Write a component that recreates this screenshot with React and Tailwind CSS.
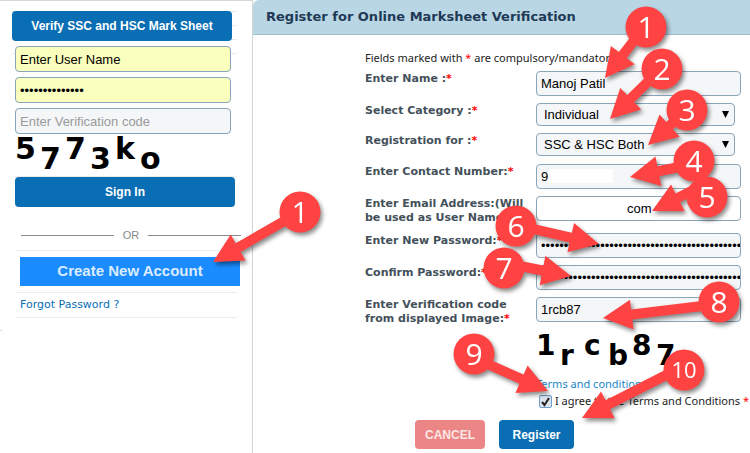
import React, { useState } from 'react';

// Numbered callouts: badge centre, arrow tail and arrow tip
const CALLOUTS = [
  { id: 'login', label: '1', center: [300, 212], tail: [300, 212], tip: [213, 262] },
  { id: 'name', label: '1', center: [646, 27], tail: [646, 25], tip: [605, 78] },
  { id: 'category', label: '2', center: [662, 69], tail: [662, 68], tip: [610, 119] },
  { id: 'contact', label: '4', center: [694, 161], tail: [694, 164], tip: [630, 177] },
  { id: 'email', label: '5', center: [707, 197], tail: [707, 183], tip: [652, 211] },
  { id: 'registration', label: '3', center: [687, 110], tail: [687, 110], tip: [648, 145] },
  { id: 'password', label: '6', center: [516, 226], tail: [516, 225], tip: [599, 244] },
  { id: 'confirm', label: '7', center: [504, 268], tail: [504, 263], tip: [571, 276] },
  { id: 'code', label: '8', center: [719, 302], tail: [719, 304], tip: [603, 318] },
  { id: 'agree', label: '9', center: [474, 354], tail: [474, 358], tip: [548, 391] },
  { id: 'register', label: '10', center: [684, 370], tail: [684, 366], tip: [582, 418] },
];

const arrowPoints = ([x1, y1], [x2, y2]) => {
  const len = Math.hypot(x2 - x1, y2 - y1);
  const ux = (x2 - x1) / len;
  const uy = (y2 - y1) / len;
  const bx = x2 - ux * 29;
  const by = y2 - uy * 29;
  const at = (x, y, d) => `${x - uy * d},${y + ux * d}`;
  return [
    at(x1, y1, 5),
    at(bx, by, 5),
    at(bx, by, 15),
    `${x2},${y2}`,
    at(bx, by, -15),
    at(bx, by, -5),
    at(x1, y1, -5),
  ].join(' ');
};

const Callouts = () => (
  <svg
    className="pointer-events-none absolute left-0 top-0 drop-shadow-[2px_3px_2px_rgba(0,0,0,0.45)]"
    width="750"
    height="453"
  >
    {CALLOUTS.map(({ id, label, center, tail, tip }) => (
      <g key={id}>
        <polygon points={arrowPoints(tail, tip)} fill="#ff4343" />
        <circle cx={center[0]} cy={center[1]} r="20.5" fill="#ff4343" />
        <text
          x={center[0]}
          y={center[1] + (label.length > 1 ? 8 : 11)}
          textAnchor="middle"
          fill="#fff"
          className={
            label.length > 1
              ? "font-['Open_Sans',sans-serif] text-[22px] font-medium"
              : "font-['Open_Sans',sans-serif] text-[30px] font-medium"
          }
        >
          {label}
        </text>
      </g>
    ))}
  </svg>
);

const Captcha = ({ code, className, charClass }) => (
  <div
    aria-label="Verification code"
    className={`flex font-['DejaVu_Sans',sans-serif] font-bold text-black ${className}`}
  >
    {code.split('').map((char, i) => (
      <span key={i} className={`${charClass} ${i % 2 ? 'self-end' : 'self-start'}`}>
        {char}
      </span>
    ))}
  </div>
);

const inputClass =
  "block w-full rounded border border-[#8aa5b8] px-1 font-['Liberation_Sans',sans-serif] text-[13px] text-black outline-none";
const buttonClass =
  "rounded bg-[#0a6eb4] font-['Liberation_Sans',sans-serif] text-[12px] font-bold text-white";

const LoginPanel = () => {
  const [user, setUser] = useState('Enter User Name');
  const [password, setPassword] = useState('verysecretpass');

  return (
    <aside className="w-[252px] shrink-0">
      <form className="border-t border-[#d8d8d8] pl-3 pr-[15px] pt-[10px]" onSubmit={(e) => e.preventDefault()}>
        <div className="bg-[repeating-linear-gradient(#ececec_0_1px,transparent_1px_14px)] bg-[length:100%_43px] bg-no-repeat">
          <button type="button" className={`${buttonClass} block h-[30px] w-[220px]`}>
            Verify SSC and HSC Mark Sheet
          </button>
          <div className="ml-[3px] mt-[5px] w-[216px] space-y-[5px]">
            <input
              aria-label="User name"
              className={`${inputClass} h-[26px] bg-[#faffbd]`}
              value={user}
              onChange={(e) => setUser(e.target.value)}
            />
            <input
              aria-label="Password"
              type="password"
              className={`${inputClass} h-[26px] bg-[#faffbd]`}
              value={password}
              onChange={(e) => setPassword(e.target.value)}
            />
            <input
              aria-label="Verification code"
              placeholder="Enter Verification code"
              className={`${inputClass} h-[26px] bg-[#f4f6f8] placeholder:text-[#9a9a9a]`}
            />
          </div>
        </div>
        <div className="ml-[3px]">
          <Captcha code="5773ko" className="mb-[2px] h-10 text-[30px] leading-[30px]" charClass="w-[25px]" />
          <div className="border-t border-[#ececec]">
            <button type="submit" className={`${buttonClass} block h-[30px] w-[220px]`}>
              Sign In
            </button>
          </div>
          <div className="-mr-1 ml-[6px] mt-5 flex h-4 items-center gap-[9px] font-['Liberation_Sans',sans-serif] text-[11px] text-[#8a8a8a]">
            <span className="h-px flex-1 bg-[#8a8a8a]" />
            OR
            <span className="h-px flex-1 bg-[#8a8a8a]" />
          </div>
          <div className="mt-[7px] border-y border-[#ececec] py-[6px] pl-[5px]">
            <button
              type="button"
              className="block h-[29px] w-[220px] bg-[#1a8cff] font-['Liberation_Sans',sans-serif] text-[15px] font-bold text-[#dcebfc]"
            >
              Create New Account
            </button>
          </div>
          <div className="border-b border-[#ececec] pl-[5px]">
            <a href="#forgot" className="block font-['DejaVu_Sans',sans-serif] text-[11px] leading-6 text-[#0a6eb4]">
              Forgot Password ?
            </a>
          </div>
        </div>
      </form>
      <span className="mt-3 block h-px w-[2px] bg-[#d8d8d8]" />
    </aside>
  );
};

const Field = ({ id, label, className = 'h-8', children }) => (
  <div className={`flex items-start ${className}`}>
    <label
      htmlFor={id}
      className="w-[171px] shrink-0 pt-px font-['DejaVu_Sans',sans-serif] text-[11px] font-bold leading-[14px] text-[#43505a]"
    >
      {label}
      <span className="text-[#f00]">*</span>
    </label>
    <div className="relative w-[205px] shrink-0">{children}</div>
  </div>
);

const SelectBox = ({ id, options }) => (
  <div className="relative w-[199px]">
    <select id={id} className={`${inputClass} h-[23px] appearance-none bg-[#f4f6f8] pl-[7px]`}>
      {options.map((option) => (
        <option key={option}>{option}</option>
      ))}
    </select>
    <svg className="pointer-events-none absolute right-[6px] top-2" width="7" height="7" viewBox="0 0 7 7">
      <path d="M0 0h7L3.5 7z" />
    </svg>
  </div>
);

const RegisterPanel = () => {
  const [agreed, setAgreed] = useState(true);

  return (
    <main className="min-h-screen min-w-0 flex-1 border-l border-[#d0d4d8]">
      <h1 className="h-[35px] rounded-tl-md border-b border-[#9dbfd2] bg-[#b9d6e4] pl-[13px] font-['DejaVu_Sans',sans-serif] text-[13px] font-bold leading-[34px] text-[#1f3a56]">
        Register for Online Marksheet Verification
      </h1>
      <form className="pl-[112px] pt-4" onSubmit={(e) => e.preventDefault()}>
        <p className="h-5 whitespace-nowrap font-['Noto_Sans',sans-serif] text-[11px] leading-[14px] text-[#222]">
          Fields marked with <span className="text-[#f00]">*</span> are compulsory/mandatory
        </p>
        <Field id="name" label="Enter Name :">
          <input id="name" className={`${inputClass} h-[25px] bg-[#f4f6f8]`} defaultValue="Manoj Patil" />
        </Field>
        <Field id="category" label="Select Category :" className="h-[30px]">
          <SelectBox id="category" options={['Individual', 'Organization']} />
        </Field>
        <Field id="registration" label="Registration for :" className="h-[31px]">
          <SelectBox id="registration" options={['SSC & HSC Both', 'SSC', 'HSC']} />
        </Field>
        <Field id="contact" label="Enter Contact Number:">
          <input id="contact" className={`${inputClass} h-[25px] bg-[#f4f6f8]`} defaultValue="9" />
          <span className="absolute left-3 top-[5px] h-[14px] w-[65px] bg-white" />
        </Field>
        <Field id="email" label="Enter Email Address:(Will be used as User Name)" className="h-[37px]">
          <input id="email" className={`${inputClass} h-[25px] bg-white pl-[90px]`} defaultValue="com" />
        </Field>
        <Field id="password" label="Enter New Password:">
          <input
            id="password"
            type="password"
            className={`${inputClass} h-[25px] bg-[#f4f6f8] pr-0`}
            defaultValue={'x'.repeat(50)}
          />
        </Field>
        <Field id="confirm" label="Confirm Password:">
          <input
            id="confirm"
            type="password"
            className={`${inputClass} h-[25px] bg-[#f4f6f8] pr-0`}
            defaultValue={'x'.repeat(50)}
          />
        </Field>
        <Field id="code" label="Enter Verification code from displayed Image:">
          <input id="code" className={`${inputClass} h-[25px] bg-[#f4f6f8]`} defaultValue="1rcb87" />
        </Field>
        <div className="pl-[171px] font-['Noto_Sans',sans-serif] text-[11px]">
          <Captcha code="1rcb87" className="mt-[2px] h-10 text-[28px] leading-[30px]" charClass="w-6" />
          <a href="#terms" className="mt-[6px] block leading-[14px] text-[#1a86cc]">
            Terms and conditions
          </a>
          <label className="mt-[2px] flex items-center gap-[3px] whitespace-nowrap pl-[3px] leading-4 text-[#222]">
            <span className="relative size-[13px]">
              <input
                type="checkbox"
                checked={agreed}
                onChange={(e) => setAgreed(e.target.checked)}
                className="block size-[13px] appearance-none rounded-xs border border-[#6b9fd0] bg-[#dde3ea]"
              />
              {agreed && (
                <svg className="pointer-events-none absolute inset-0" width="13" height="13" viewBox="0 0 13 13">
                  <path d="M3 7l2.5 3L10 3" fill="none" stroke="#222" strokeWidth="2" />
                </svg>
              )}
            </span>
            <span>
              I agree to the Terms and Conditions <span className="text-[#f00]">*</span>
            </span>
          </label>
        </div>
        <div className="mt-[11px] flex gap-[14px] pl-[50px]">
          <button
            type="button"
            className="h-[29px] w-[70px] rounded bg-[#ec8585] font-['Liberation_Sans',sans-serif] text-[12px] font-bold text-[#fbe6e6]"
          >
            CANCEL
          </button>
          <button type="submit" className={`${buttonClass} h-[29px] w-[75px]`}>
            Register
          </button>
        </div>
      </form>
    </main>
  );
};

const App = () => {
  return (
    <div className="relative flex overflow-hidden bg-white">
      <LoginPanel />
      <RegisterPanel />
      <Callouts />
    </div>
  );
};

export default App;
